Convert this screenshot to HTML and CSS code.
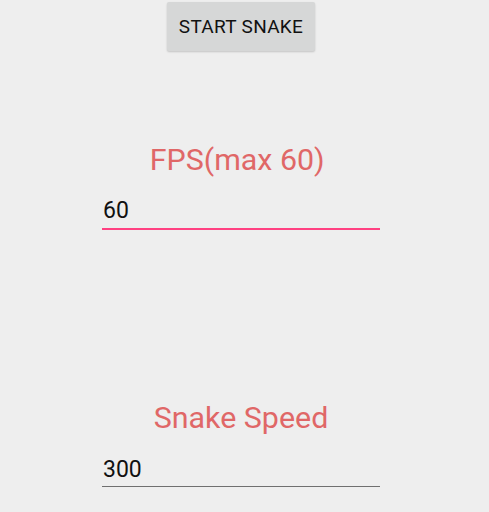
FILE: index.html
```html
<!DOCTYPE html>
<html lang="en">
<head>
  <meta charset="UTF-8">
  <meta name="viewport" content="width=device-width, initial-scale=1.0">
  <title>Snake</title>
  <link rel="stylesheet" href="styles.css">
</head>
<body>
  <div class="container">
    <button class="start-btn">START SNAKE</button>

    <!-- FPS -->
    <label class="field-label fps-label" for="fps">FPS(max 60)&nbsp;</label>
    <input class="field-input focused" type="text" id="fps" value="60">

    <!-- Velocidade -->
    <label class="field-label speed-label" for="speed">Snake Speed</label>
    <input class="field-input speed-input" type="text" id="speed" value="300">
  </div>
</body>
</html>
```

FILE: styles.css
```css
body {
  margin: 0;
  padding: 0;
  background-color: #eeeeee;
  font-family: Roboto, "Liberation Sans", sans-serif;
}
.container {
  width: 278px;
  margin-left: 102px;
  display: flex;
  flex-direction: column;
}
.start-btn {
  align-self: center;
  width: 148px;
  height: 49px;
  margin-top: 2px;
  background-color: #d6d7d7;
  color: #111;
  border: none;
  border-radius: 2px;
  box-shadow: 0 1px 2px rgba(0, 0, 0, 0.18);
  font-family: Roboto, "Liberation Sans", sans-serif;
  font-size: 19px;
  font-weight: 400;
  letter-spacing: 0.3px;
  padding: 0;
}
.field-label {
  display: block;
  text-align: center;
  color: #e06767;
  font-size: 30.4px;
  line-height: 36px;
  margin-top: 91px;
  margin-bottom: 18px;
}
.speed-label {
  margin-top: 170px;
  margin-bottom: 19px;
}
.field-input {
  display: block;
  width: 100%;
  box-sizing: border-box;
  height: 33px;
  margin: 0;
  padding: 0 1px 4px;
  background: transparent;
  border: none;
  border-bottom: 1px solid #6f6f6f;
  outline: none;
  color: #111;
  font-family: Roboto, "Liberation Sans", sans-serif;
  font-size: 23px;
  line-height: 28px;
}
.field-input.focused {
  border-bottom: 2px solid #ff4081;
  height: 34px;
}
.speed-input {
  padding-bottom: 3px;
  height: 32px;
}
```
